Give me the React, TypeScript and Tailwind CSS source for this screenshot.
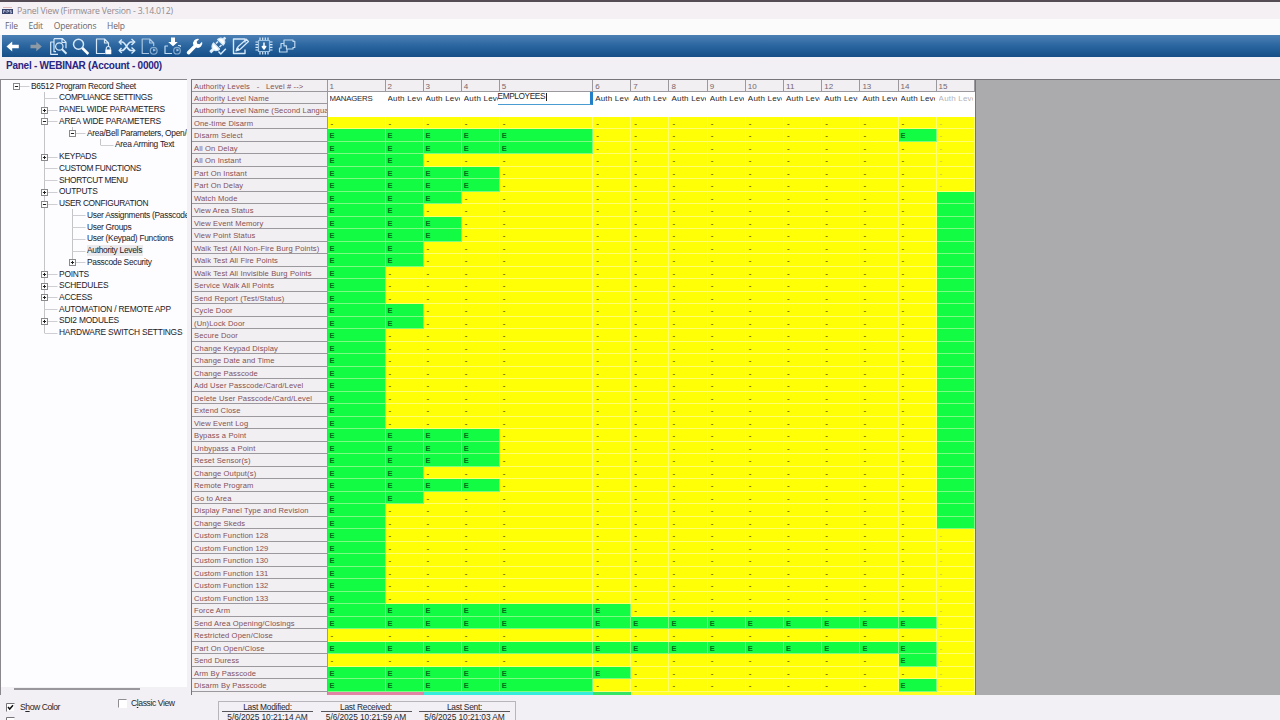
import React from "react";

type Row = { label: string; on: number[]; last?: boolean };

const range = (n: number) => Array.from({ length: n }, (_, i) => i + 1);

const ROWS: Row[] = [
  { label: "One-time Disarm", on: [] },
  { label: "Disarm Select", on: [...range(5), 14] },
  { label: "All On Delay", on: range(5) },
  { label: "All On Instant", on: range(2) },
  { label: "Part On Instant", on: range(4) },
  { label: "Part On Delay", on: range(4) },
  { label: "Watch Mode", on: range(3), last: true },
  { label: "View Area Status", on: range(2), last: true },
  { label: "View Event Memory", on: range(3), last: true },
  { label: "View Point Status", on: range(3), last: true },
  { label: "Walk Test (All Non-Fire Burg Points)", on: range(2), last: true },
  { label: "Walk Test All Fire Points", on: range(2), last: true },
  { label: "Walk Test All Invisible Burg Points", on: range(1), last: true },
  { label: "Service Walk All Points", on: range(1), last: true },
  { label: "Send Report (Test/Status)", on: range(1), last: true },
  { label: "Cycle Door", on: range(2), last: true },
  { label: "(Un)Lock Door", on: range(2), last: true },
  { label: "Secure Door", on: range(1), last: true },
  { label: "Change Keypad Display", on: range(1), last: true },
  { label: "Change Date and Time", on: range(1), last: true },
  { label: "Change Passcode", on: range(1), last: true },
  { label: "Add User Passcode/Card/Level", on: range(1), last: true },
  { label: "Delete User Passcode/Card/Level", on: range(1), last: true },
  { label: "Extend Close", on: range(1), last: true },
  { label: "View Event Log", on: range(1), last: true },
  { label: "Bypass a Point", on: range(4), last: true },
  { label: "Unbypass a Point", on: range(4), last: true },
  { label: "Reset Sensor(s)", on: range(4), last: true },
  { label: "Change Output(s)", on: range(2), last: true },
  { label: "Remote Program", on: range(4), last: true },
  { label: "Go to Area", on: range(2), last: true },
  { label: "Display Panel Type and Revision", on: range(1), last: true },
  { label: "Change Skeds", on: range(1), last: true },
  { label: "Custom Function 128", on: range(1) },
  { label: "Custom Function 129", on: range(1) },
  { label: "Custom Function 130", on: range(1) },
  { label: "Custom Function 131", on: range(1) },
  { label: "Custom Function 132", on: range(1) },
  { label: "Custom Function 133", on: range(1) },
  { label: "Force Arm", on: range(6) },
  { label: "Send Area Opening/Closings", on: range(14) },
  { label: "Restricted Open/Close", on: [] },
  { label: "Part On Open/Close", on: range(14) },
  { label: "Send Duress", on: [14] },
  { label: "Arm By Passcode", on: range(6) },
  { label: "Disarm By Passcode", on: [...range(5), 14] },
];

const COLS = range(15);
const GRID =
  "grid shrink-0 grid-cols-[135.5px_58px_38px_38.3px_38px_93.4px_38.1px_38.2px_38.2px_38.2px_38.2px_38.2px_38.2px_38.2px_38px_38.5px] ";

type Node = { text: string; level: number; box?: "+" | "-"; end?: boolean; guides?: number[]; sel?: boolean; tight?: boolean };

const TREE: Node[] = [
  { text: "B6512 Program Record Sheet", level: 0, box: "-" },
  { text: "COMPLIANCE SETTINGS", level: 1, tight: true },
  { text: "PANEL WIDE PARAMETERS", level: 1, box: "+" },
  { text: "AREA WIDE PARAMETERS", level: 1, box: "-" },
  { text: "Area/Bell Parameters, Open/Close", level: 2, box: "-", end: true, guides: [1] },
  { text: "Area Arming Text", level: 3, end: true, guides: [1] },
  { text: "KEYPADS", level: 1, box: "+" },
  { text: "CUSTOM FUNCTIONS", level: 1, tight: true },
  { text: "SHORTCUT MENU", level: 1, tight: true },
  { text: "OUTPUTS", level: 1, box: "+" },
  { text: "USER CONFIGURATION", level: 1, box: "-", tight: true },
  { text: "User Assignments (Passcodes)", level: 2, guides: [1] },
  { text: "User Groups", level: 2, guides: [1] },
  { text: "User (Keypad) Functions", level: 2, guides: [1] },
  { text: "Authority Levels", level: 2, guides: [1], sel: true },
  { text: "Passcode Security", level: 2, box: "+", end: true, guides: [1] },
  { text: "POINTS", level: 1, box: "+" },
  { text: "SCHEDULES", level: 1, box: "+" },
  { text: "ACCESS", level: 1, box: "+" },
  { text: "AUTOMATION / REMOTE APP", level: 1 },
  { text: "SDI2 MODULES", level: 1, box: "+" },
  { text: "HARDWARE SWITCH SETTINGS", level: 1, end: true },
];

function Connector({ node }: { node: Node }) {
  const x = 15.5 + node.level * 28;
  const w = 30 + node.level * 28;
  return (
    <svg className="h-[12px] shrink-0" width={w} height={12} viewBox={`0 0 ${w} 12`} fill="none">
      {node.guides?.map((g) => (
        <path key={g} d={`M${15.5 + g * 28} 0V12`} stroke="#c4c3c8" />
      ))}
      {node.level > 0 && <path d={`M${x} 0V${node.end ? 6 : 12}`} stroke="#c4c3c8" />}
      <path d={`M${x} 6.5H${x + 13}`} stroke="#cfced3" />
      {node.box && (
        <>
          <rect x={x - 3} y={3.5} width={6} height={6} fill="#fff" stroke="#8a898e" />
          <path d={`M${x - 1.6} 6.5H${x + 1.6}`} stroke="#222" />
          {node.box === "+" && <path d={`M${x} 4.9V8.1`} stroke="#222" />}
        </>
      )}
    </svg>
  );
}

function TreeRow({ node }: { node: Node }) {
  const tracking = node.level !== 1 ? "tracking-[-0.28px] " : node.tight ? "tracking-[-0.34px] " : "tracking-[-0.2px] ";
  return (
    <div className="flex h-[11.74px] shrink-0 items-center overflow-hidden whitespace-nowrap">
      <Connector node={node} />
      <span className={tracking + (node.sel ? "bg-[#ebeaed] " : "") + "pr-px pl-[0.5px] text-[8.4px] leading-[11px] text-[#222126]"}>
        {node.text}
      </span>
    </div>
  );
}

function Svg({ children }: { children: React.ReactNode }) {
  return (
    <svg width={20} height={20} viewBox="0 0 20 20" fill="none" stroke="#d5e9fa" strokeWidth={1.2} strokeLinejoin="round" className="shrink-0">
      {children}
    </svg>
  );
}

function Toolbar() {
  return (
    <div className="ml-[2px] flex h-[22px] shrink-0 items-center bg-linear-to-b from-[#4b80b4] via-[#2a659f] to-[#164f88] pl-px">
      <div className="flex gap-[2.8px]">
        <Svg><path d="M3.5 10.5 9.2 5.5v3.2H15.8v3.6H9.2v3.2z" fill="#fff" stroke="none" /></Svg>
        <Svg><path d="M15.8 10.5 10.3 5.7v3.1H4.5v3.4h5.8v3.1z" fill="#8d99a5" stroke="none" /></Svg>
        <Svg>
          <path d="M5 6H1.7v12.3H9M5 2.7h8.5l3.5 3.5v6M5 2.7v13H7M13 3v3.5h4" />
          <circle cx="10.3" cy="10.5" r="3.7" />
          <path d="m13 13.3 4.5 4.5" strokeWidth="2" />
        </Svg>
        <Svg>
          <circle cx="7.5" cy="8.2" r="5" strokeWidth="1.5" />
          <path d="m11.3 12 6 6" strokeWidth="2.5" stroke="#fff" />
        </Svg>
        <Svg>
          <path d="M11 17.5H2.5V3h8l4 4v4M10.5 3v4h4" />
          <path d="M12.3 13.8v-1.3a2 2 0 0 1 4 0v1.3" />
          <rect x="11.3" y="13.5" width="6" height="4.7" fill="#fff" stroke="none" />
        </Svg>
        <Svg>
          <path d="M3 6h2c4 0 5 8.500 9 8.500h3M3 14.500h2c4 0 5-8.500 9-8.500h3" strokeWidth="1.700" />
          <path d="m14.500 3 3.300 3-3.300 3M14.500 11.500l3.300 3-3.300 3M4.800 3.500 2.200 6l2.300 2.500M4.500 12l-2.300 2.500L4.800 17" strokeWidth="1.400" />
        </Svg>
        <Svg>
          <path d="M9 17.5H2.200V3h7.500l4 4v3M9.700 3v4h4" stroke="#a9c7e2" />
          <circle cx="13.700" cy="14.700" r="3.400" stroke="#84abd0" /><path d="M13.700 12.800v2l1.700-1" stroke="#a9c7e2" />
        </Svg>
        <Svg>
          <path d="M8 1.500h4V6h2.800L10 10.300 5.200 6H8z" fill="#fff" stroke="none" />
          <path d="M5 10H2v7.500h7M15 9.500h2.300v1.500" stroke="#c0dcf3" />
          <circle cx="14" cy="14.700" r="3.300" stroke="#84abd0" /><path d="M14 12.800v2l1.700-1" stroke="#a9c7e2" />
        </Svg>
        <Svg>
          <path d="M3.400 18.400a1.800 1.800 0 0 1-1.200-3l6.300-6.200A4.600 4.600 0 0 1 14.200 3l-2.500 2.600.5 2.200 2.300.5 2.600-2.500a4.600 4.600 0 0 1-6 5.800l-6.300 6.300a1.800 1.800 0 0 1-1.400.5z" fill="#fff" stroke="none" />
        </Svg>
        <Svg>
          <path d="m9.700 3.500 5.500 5.500c1.500-1.400 2-3.500.7-5l1.600-1.600-1-1-1.600 1.600C13.400 1.700 11.200 2 9.700 3.500z" fill="#fff" />
          <path d="m5.500 7 6 6c-1.500 1.700-4 2-5.500.8l-2.700 2.700-1.300-1.300 2.700-2.700C3.500 11 4 8.500 5.500 7z" fill="#fff" />
          <path d="m8 7.500 2-2M11.500 11l2-2" strokeWidth="1.600" />
          <path d="m10.500 15.500 2.300 2.400 5-5.200" strokeWidth="1.500" />
        </Svg>
        <Svg>
          <path d="M14 6.500V3H2.500v14.500H14v-4" strokeWidth="1.400" />
          <path d="M5.500 14.500 7 10.800l8.300-7.600 2.200 2.300-8.300 7.700z" />
          <path d="m5 15 3.500-1.200-2.200-2.200z" fill="#fff" />
        </Svg>
        <Svg>
          <rect x="4.500" y="4.500" width="11" height="11" stroke="#9cc2e4" />
          <path d="M6 4V1.500M8.700 4V1.500M11.300 4V1.500M14 4V1.500M6 18.500V16M8.700 18.500V16M11.300 18.500V16M14 18.500V16M4 6H1.500M4 8.700H1.500M4 11.300H1.500M4 14H1.500M18.500 6H16M18.500 8.700H16M18.500 11.300H16M18.500 14H16" />
          <path d="M10 6.500v4M8.300 10.500h3.400L10 13z" fill="#fff" stroke="#fff" strokeWidth="1.500" />
        </Svg>
        <Svg>
          <path d="M7 4h9v1.300h1.800v6.200H16V13H9.500V9.800H7zM7 7.500H4v4.500H2.500V16H10v-3" stroke="#bcd8f0" />
        </Svg>
      </div>
    </div>
  );
}

function Label({ children }: { children: React.ReactNode }) {
  return (
    <div className="overflow-hidden border-r border-b border-[#9b999d] bg-[#f1eff2] pl-[2px] text-[7.600px] leading-[13px] tracking-[0.120px] whitespace-pre text-[#855055]">
      {children}
    </div>
  );
}

function Cell({ row, col }: { row: Row; col: number }) {
  const on = row.on.includes(col);
  const off15 = col === 15;
  if (on || (off15 && row.last)) {
    return (
      <div className="overflow-hidden border-r border-b border-[#7dfb83] bg-[#12fc44] pl-[2px] text-[7.500px] leading-[13px] font-bold text-[#086b1c]">
        {on ? "E" : ""}
      </div>
    );
  }
  return (
    <div className={"overflow-hidden border-r border-b border-[#ffff71] bg-[#ffff05] pl-[3px] text-[8px] leading-[13px] font-bold " + (off15 ? "text-[#d6d23c]" : "text-[#77720a]")}>
      -
    </div>
  );
}

function Matrix() {
  return (
    <div className="relative flex w-[784px] shrink-0 flex-col overflow-hidden border-t border-l border-[#77757a] bg-white">
      <div className={GRID + "h-[12px]"}>
        <Label>{"Authority Levels   -   Level # -->"}</Label>
        {COLS.map((c) => (
          <div key={c} className="overflow-hidden border-r border-b border-[#9b999d] bg-[#f1eff2] pl-[2px] text-[8px] leading-[13px] text-[#77666b]">{c}</div>
        ))}
      </div>
      <div className={GRID + "h-[12px]"}>
        <Label>Authority Level Name</Label>
        {COLS.map((c) => (
          <div key={c} className="overflow-hidden pr-[2px] pl-[2px]">
            <div
              className={
                "overflow-hidden leading-[13px] whitespace-nowrap " +
                (c === 1 ? "text-[7.800px] tracking-[-0.200px] " : "text-[8px] tracking-[0.200px] ") +
                (c === 15 ? "text-[#b5b4b8]" : "text-[#28272b]")
              }
            >
              {c === 1 ? "MANAGERS" : c === 5 ? "" : "Auth Level " + c}
            </div>
          </div>
        ))}
      </div>
      <div className={GRID + "h-[13px]"}>
        <Label>Authority Level Name (Second Language)</Label>
      </div>
      {ROWS.map((r, i) => (
        <div key={r.label} className={GRID + (i % 2 ? "h-[13px]" : "h-[12px]")}>
          <Label>{r.label}</Label>
          {COLS.map((c) => (
            <Cell key={c} row={r} col={c} />
          ))}
        </div>
      ))}
      <div className={GRID + "h-[12px]"}>
        <div className="border-r border-[#9b999d] bg-[#f1eff2]" />
        <div className="col-span-2 bg-[#e083a5]" />
        <div className="col-span-3 bg-[#34eedb]" />
        <div className="bg-[#35e462]" />
        <div className="col-span-9 bg-[#ffff24]" />
      </div>
      <div className="absolute top-[12px] left-[305.500px] h-[13px] w-[95.500px] border-r-[3px] border-b border-r-[#2380c8] border-b-[#4a9bd0] bg-white text-[8.300px] leading-[9px] tracking-[-0.400px] text-[#28272b]">
        EMPLOYEES<span className="ml-px inline-block h-[8px] w-px bg-[#222] align-[-1.500px]" />
      </div>
    </div>
  );
}

function Stamp({ title, value }: { title: string; value: string }) {
  return (
    <div className="flex w-[91px] flex-col items-center">
      <div className="h-[10px] w-full border-b border-[#57565b] text-center text-[8.400px] leading-[10px] tracking-[-0.250px]">{title}</div>
      <div className="text-[8.400px] leading-[11px] tracking-[-0.080px] whitespace-nowrap">{value}</div>
    </div>
  );
}

export default function App() {
  return (
    <div className="flex h-[720px] w-[1280px] flex-col overflow-hidden bg-[#f2f0f4] font-['Liberation_Sans',Arial,sans-serif] text-[#28272b]">
      <div className="flex h-[19px] shrink-0 items-center border-t-2 border-[#564c55] bg-[#f5f0f4] pl-[2px]">
        <svg width="11" height="10" viewBox="0 0 11 10">
          <path d="M1 1.500H10" stroke="#ddb6b8" />
          <rect y="3" width="11" height="5" fill="#39446d" />
          <path d="M1.500 7V4.500H3V6M5 7V4.500H6.500V6M9.500 4.500H8v1.200h1.500V7H8" stroke="#cdd3ea" strokeWidth=".7" fill="none" />
        </svg>
        <span className="ml-[4px] font-['Open_Sans','Noto_Sans',sans-serif] text-[8.700px] leading-[16px] tracking-[-0.200px] text-[#8f8b90]">Panel View (Firmware Version - 3.14.012)</span>
      </div>
      <div className="flex h-[16px] shrink-0 items-center gap-[10.800px] bg-[#fcfbfc] pb-[2px] pl-[5px] font-['Open_Sans','Noto_Sans',sans-serif] text-[8.500px] leading-[14px] tracking-[-0.180px] text-[#69666b]">
        <span>File</span><span>Edit</span><span>Operations</span><span>Help</span>
      </div>
      <Toolbar />
      <div className="h-[22px] shrink-0 pl-[6px] text-[10px] leading-[17px] font-bold tracking-[-0.250px] text-[#292583]">Panel - WEBINAR (Account - 0000)</div>
      <div className="flex h-[616px] shrink-0">
        <div className="flex w-[187px] shrink-0 flex-col overflow-hidden border-t border-l border-[#8a888d] bg-[#fdfcfe] pt-[0.400px]">
          <div className="-ml-[0.500px] flex flex-col">
            {TREE.map((n) => (
              <TreeRow key={n.text} node={n} />
            ))}
          </div>
          <div className="mt-auto h-[8px] shrink-0 bg-[#f2f0f4] pl-[13px]">
            <div className="mt-px h-[2px] w-[126px] bg-[#99979b]" />
          </div>
        </div>
        <div className="w-[4px] shrink-0" />
        <Matrix />
        <div className="flex-1 border-t border-l border-[#77757a] bg-[#abaaac]" />
      </div>
      <div className="flex h-[25px] shrink-0 overflow-hidden">
        <div className="flex w-[118px] shrink-0 flex-col gap-[5px] pt-[7px] pl-[6px]">
          <div className="flex h-[10px] items-center">
            <svg width="9" height="9" viewBox="0 0 9 9" fill="none">
              <path d="M.5 8.500V.5H8.500" stroke="#77757a" /><rect x="1" y="1" width="7" height="7" fill="#fff" />
              <path d="M2 4 3.700 6 7 2.300" stroke="#111" strokeWidth="1.500" />
            </svg>
            <span className="ml-[5px] pt-px text-[8.600px] leading-[9px] tracking-[-0.450px]">S<u>h</u>ow Color</span>
          </div>
          <svg className="shrink-0" width="60" height="9" viewBox="0 0 60 9" fill="none">
            <path d="M.5 8.500V.5H8.500" stroke="#77757a" /><rect x="1" y="1" width="7" height="7" fill="#fff" />
          </svg>
        </div>
        <div className="flex h-[9px] w-[100px] shrink-0 items-center pt-[8px]">
          <svg width="9" height="9" viewBox="0 0 9 9" fill="none">
            <path d="M.5 8.500V.5H8.500" stroke="#8f8d92" /><rect x="1" y="1" width="8" height="8" fill="#fff" />
          </svg>
          <span className="ml-[4px] text-[8.600px] leading-[9px] tracking-[-0.420px]">C<u>l</u>assic View</span>
        </div>
        <div className="mt-[6px] flex h-[30px] w-[298px] shrink-0 gap-[7.500px] border border-[#b7b5b9] pl-[3px]">
          <Stamp title="Last Modified:" value="5/6/2025 10:21:14 AM" />
          <Stamp title="Last Received:" value="5/6/2025 10:21:59 AM" />
          <Stamp title="Last Sent:" value="5/6/2025 10:21:03 AM" />
        </div>
      </div>
    </div>
  );
}
